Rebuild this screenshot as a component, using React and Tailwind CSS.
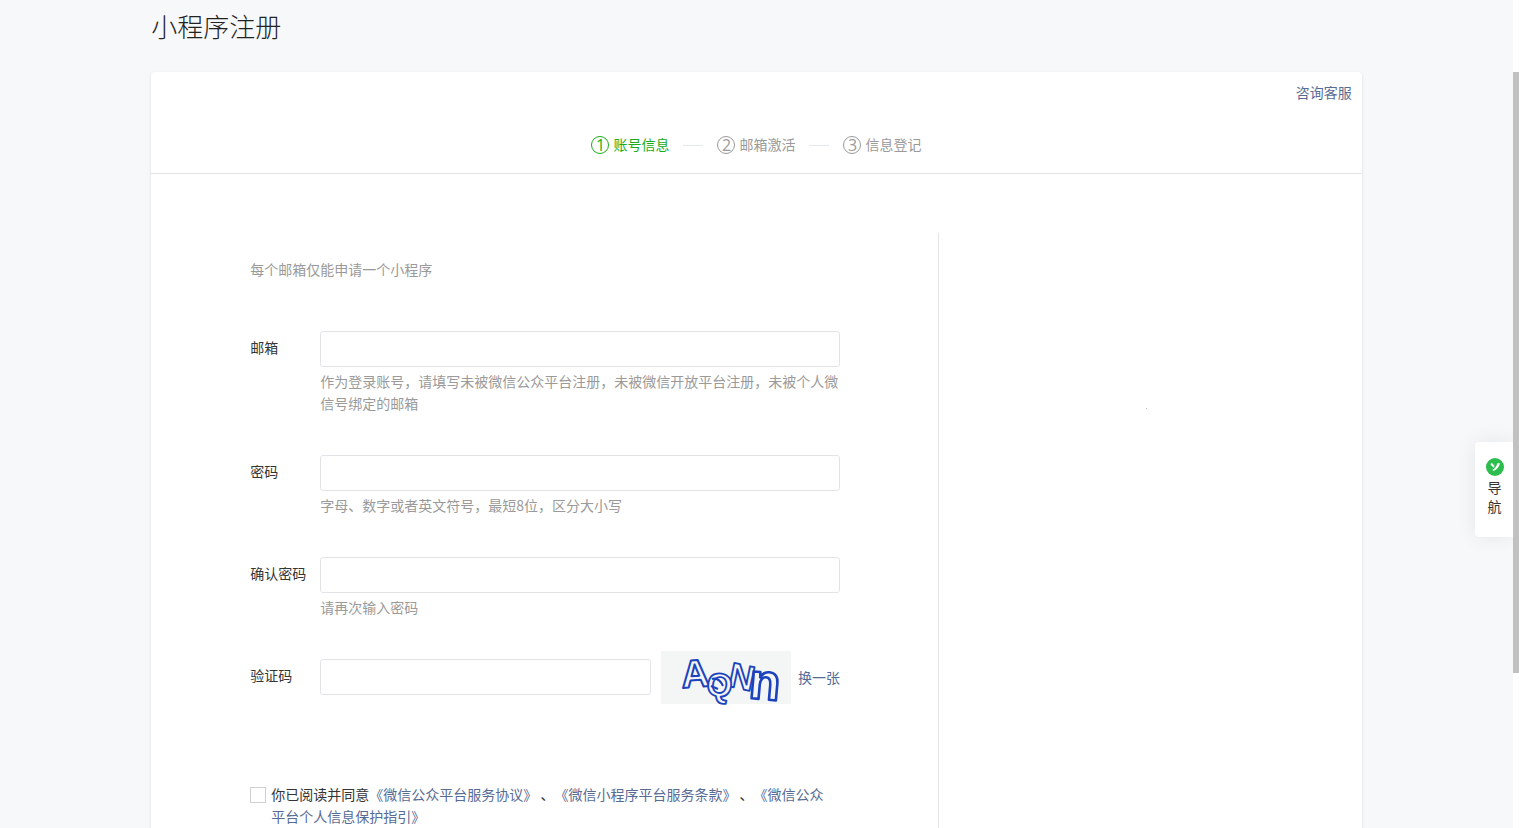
import React from "react";

const steps = ["账号信息", "邮箱激活", "信息登记"];

const fields = [
  {
    id: "email",
    label: "邮箱",
    type: "email",
    help: "作为登录账号，请填写未被微信公众平台注册，未被微信开放平台注册，未被个人微信号绑定的邮箱",
  },
  {
    id: "password",
    label: "密码",
    type: "password",
    help: "字母、数字或者英文符号，最短8位，区分大小写",
  },
  { id: "confirm", label: "确认密码", type: "password", help: "请再次输入密码" },
];

const inputClass =
  "block h-9 rounded-[3px] border border-[#e4e4e8] bg-white px-2.5 text-sm outline-none focus:border-[#1aad19]";

function Steps() {
  return (
    <ol className="flex items-center justify-center gap-3.5">
      {steps.map((name, i) => (
        <React.Fragment key={name}>
          {i > 0 && <li aria-hidden="true" className="h-px w-5 bg-[#e4e8eb]" />}
          <li
            className={
              i === 0
                ? "flex items-center gap-1 text-[#1aad19]"
                : "flex items-center gap-1 text-[#9a9a9a]"
            }
          >
            <span className="flex size-[18px] items-center justify-center rounded-full border border-current font-['Open_Sans'] text-base leading-4">
              {i + 1}
            </span>
            <span className="pb-0.5 leading-5">{name}</span>
          </li>
        </React.Fragment>
      ))}
    </ol>
  );
}

function Captcha() {
  return (
    <svg
      viewBox="0 0 130 53"
      className="h-[53px] w-[130px] shrink-0 overflow-visible"
      fontFamily="Liberation Sans, sans-serif"
      strokeLinejoin="round"
      stroke="#1c43bd"
      fill="#f4f6f5"
      fontWeight="bold"
    >
      <rect width="130" height="53" stroke="none" />
      <text x="21" y="37" fontSize="39" strokeWidth="2" transform="rotate(-4 21 37)">A</text>
      <text x="66" y="35" fontSize="35" strokeWidth="1.8" transform="rotate(12 66 35)">N</text>
      <text x="44" y="43" fontSize="33" strokeWidth="1.8" transform="rotate(10 44 43)">Q</text>
      <text x="87" y="47" fontSize="51" strokeWidth="2.6" transform="rotate(5 87 47)">n</text>
      <path d="M51 28q7-2 11 7M50 35l7 3" fill="none" strokeWidth="2" />
    </svg>
  );
}

export default function App() {
  return (
    <div className="flex h-screen overflow-hidden bg-[#f7f8fa] font-['Noto_Sans_CJK_SC',sans-serif] text-sm leading-[22px] text-[#353535]">
      <main className="min-w-0 flex-1 overflow-hidden">
        <div className="mx-auto w-4/5">
          <h1 className="pt-2 pb-7 text-[26px] font-light leading-9 text-[#222]">小程序注册</h1>
          <section className="rounded-t bg-white shadow-[0_1px_3px_rgba(0,0,0,0.12)]">
            <header className="border-b border-[#e4e4e8] px-2.5 pt-[9px] pb-[17px]">
              <div className="mb-[31px] text-right">
                <a href="#service" className="text-[#576b95]">咨询客服</a>
              </div>
              <Steps />
            </header>
            <div className="flex pt-[59px]">
              <form className="w-[calc(65%+1px)] border-r border-[#e4e4e8] pt-[25px] pr-[98px] pb-20 pl-[99px]">
                <p className="mb-[51px] text-[#9a9a9a]">每个邮箱仅能申请一个小程序</p>
                {fields.map((f) => (
                  <div key={f.id} className="mb-[41px] flex">
                    <label htmlFor={f.id} className="w-[70px] shrink-0 pt-[5px]">{f.label}</label>
                    <div className="min-w-0 flex-1">
                      <input id={f.id} type={f.type} className={inputClass + " w-full"} />
                      <p className="mt-[3px] text-[#9a9a9a]">{f.help}</p>
                    </div>
                  </div>
                ))}
                <div className="-mt-2 flex">
                  <label htmlFor="captcha" className="w-[70px] shrink-0 pt-[13px]">验证码</label>
                  <input id="captcha" type="text" className={inputClass + " mt-2 min-w-0 flex-1"} />
                  <div className="ml-2.5 flex shrink-0 items-center gap-[7px]">
                    <Captcha />
                    <a href="#refresh" className="pb-0.5 text-[#576b95]">换一张</a>
                  </div>
                </div>
                <div className="mt-[79px] flex gap-[5px] pr-2">
                  <input
                    id="agree"
                    type="checkbox"
                    className="mt-1 size-4 shrink-0 appearance-none border border-[#d0d0d0] bg-white checked:bg-[#1aad19]"
                  />
                  <label htmlFor="agree" className="[text-spacing-trim:space-all]">
                    你已阅读并同意<a href="#terms" className="text-[#576b95]">《微信公众平台服务协议》</a>
                    {" 、"}
                    <a href="#mini-terms" className="text-[#576b95]">《微信小程序平台服务条款》</a>
                    {" 、"}
                    <a href="#privacy" className="text-[#576b95]">《微信公众平台个人信息保护指引》</a>
                  </label>
                </div>
              </form>
              <div className="flex flex-1 justify-center pt-[175px] pr-2">
                <span className="size-px bg-[#c0c0c0]" />
              </div>
            </div>
          </section>
        </div>
      </main>
      <aside className="z-10 flex w-0 items-center justify-end pt-[151px]">
        <button
          type="button"
          className="flex h-[95px] w-[38px] shrink-0 flex-col items-center rounded-l-sm bg-white pt-4 pl-px leading-[19px] shadow-[0_0_20px_rgba(0,0,0,0.08)]"
        >
          <svg viewBox="0 0 18 18" className="mb-0.5 size-[18px] shrink-0">
            <circle cx="9" cy="9" r="9" fill="#2dbd4e" />
            <path d="M4.4 6.2c.3-1.1 1.6-1.2 2.3-.5l1.9 2.4-1.2 1.6zM11.4 5.2l2.6.1c-.8 3.6-3 6.5-6.6 7.6l-1-.9c2.500-1.400 4-3.700 5-6.800z" fill="#fff" />
          </svg>
          <span>导</span>
          <span>航</span>
        </button>
      </aside>
      <div aria-hidden="true" className="z-20 w-1.5 shrink-0 bg-white pt-[72px]">
        <div className="h-[601px] bg-[#c1c1c1]" />
      </div>
    </div>
  );
}
